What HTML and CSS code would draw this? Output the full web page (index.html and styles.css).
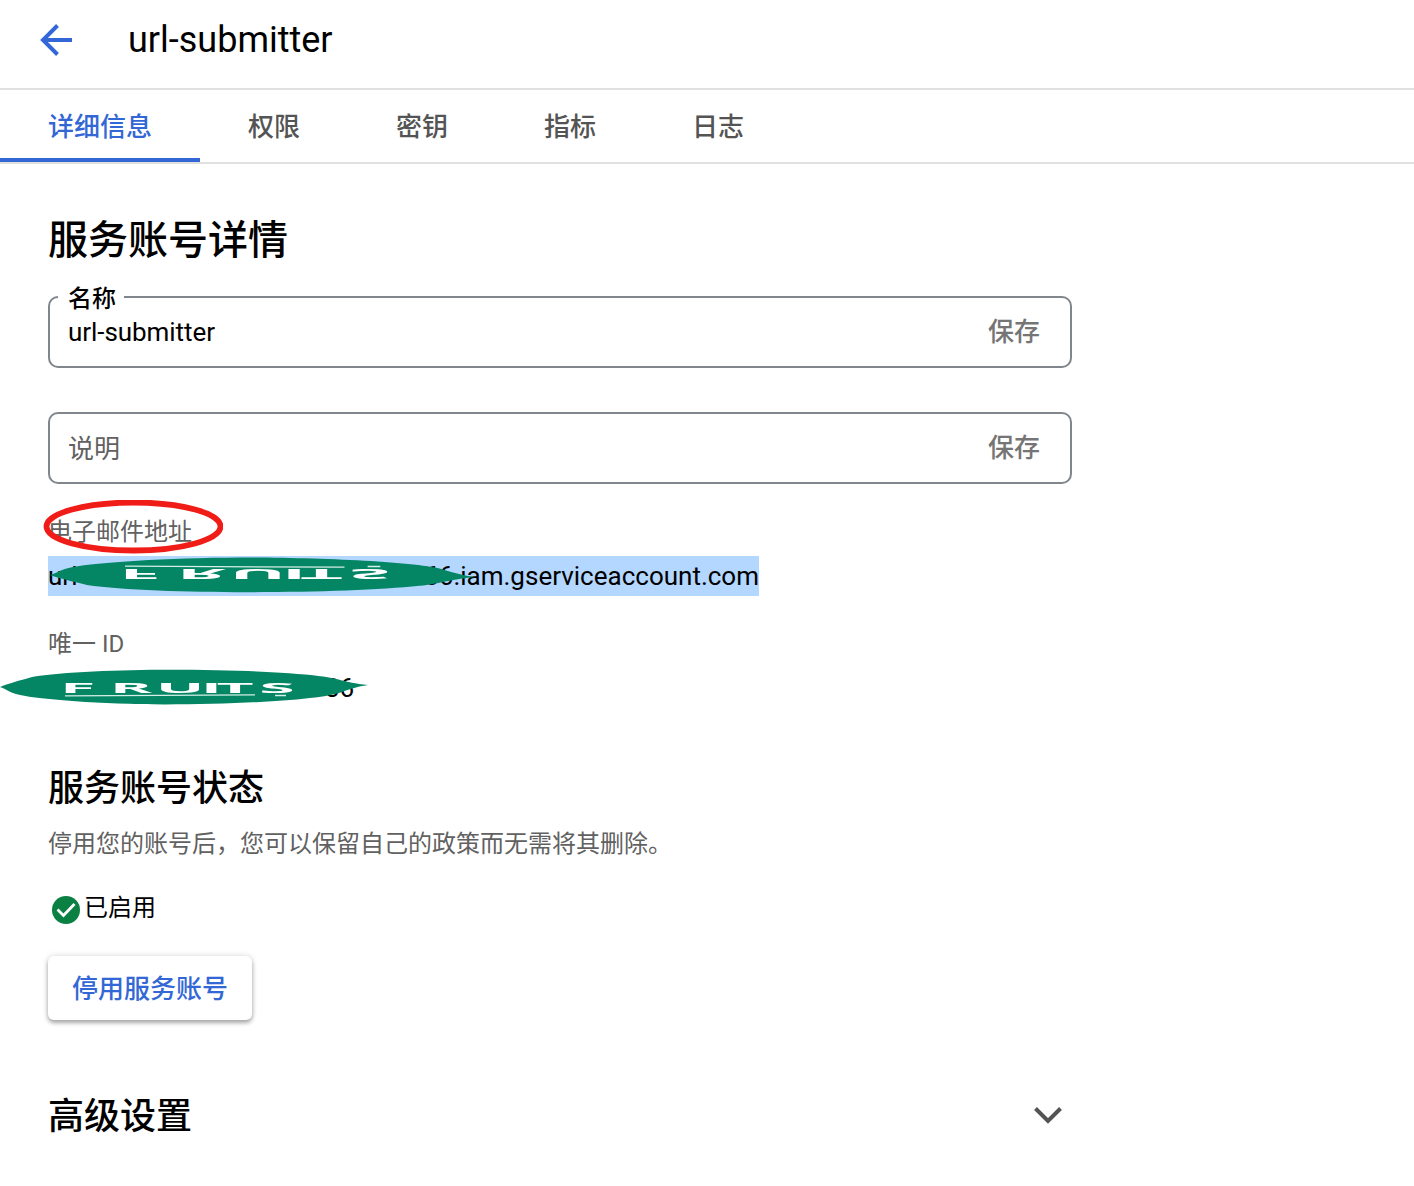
FILE: index.html
```html
<!DOCTYPE html>
<html lang="zh-CN">
<head>
<meta charset="utf-8">
<title>url-submitter</title>
<link rel="stylesheet" href="styles.css">
</head>
<body>
<svg class="defs" width="0" height="0" aria-hidden="true">
  <defs>
    <symbol id="fruit-label" viewBox="0 0 368 36" preserveAspectRatio="none">
      <path fill="#048564" d="M0 18C10 14 18 12 32 8C62 3 120 0.800 170 0.800C230 0.800 285 3 320 7.200C338 9 342 13 368 16C356 18 354 19 343 22.500C325 31 235 35.500 165 35.500C100 35 40 30.500 20 26C8 23 8 21 0 18Z"/>
      <g class="fruit-text">
        <text transform="translate(60 23.800) scale(4.600 1)" x="0 10.800 20.800 30.600 34 43.300">FRUITS</text>
      </g>
      <path stroke="#d5eee6" stroke-width="1.200" d="M65 26.800L255 25.800"/>
      <path stroke="#d5eee6" stroke-width="1.500" d="M275 26.500H286"/>
    </symbol>
  </defs>
</svg>
<header class="topbar">
  <svg class="back" width="32" height="32" viewBox="0 0 32 32" fill="none" stroke="#3367d6" stroke-width="4"><path d="M32 16H3M17.500 1.500L3 16l14.500 14.500"/></svg>
  <h1 class="title">url-submitter</h1>
</header>
<nav class="tabs">
  <a class="tab active">详细信息</a><a class="tab">权限</a><a class="tab">密钥</a><a class="tab">指标</a><a class="tab">日志</a>
</nav>
<main class="content">
  <h2 class="heading">服务账号详情</h2>
  <div class="field">
    <span class="field-label">名称</span>
    <span class="field-value">url-submitter</span>
    <span class="save">保存</span>
  </div>
  <div class="field">
    <span class="placeholder">说明</span>
    <span class="save">保存</span>
  </div>
  <div class="label email-label"><span>电子邮件地址</span>
    <svg class="ring" width="180" height="54" viewBox="0 0 180 54"><ellipse cx="90.500" cy="26.500" rx="87" ry="24" fill="none" stroke="#f01c17" stroke-width="5.800"/></svg>
  </div>
  <div class="value email"><span class="selected"><span>url-s</span><span class="email-end">66.iam.gserviceaccount.com</span></span>
    <svg class="patch patch-email"><use href="#fruit-label" width="425" height="36"/></svg>
  </div>
  <div class="label id-label">唯一 ID</div>
  <div class="value id"><span class="id-end">36</span>
    <svg class="patch patch-id"><use href="#fruit-label" width="368" height="36"/></svg>
  </div>
  <h3 class="subheading">服务账号状态</h3>
  <p class="desc">停用您的账号后，您可以保留自己的政策而无需将其删除。</p>
  <div class="status">
    <svg width="28" height="28" viewBox="0 0 28 28"><circle cx="14" cy="14" r="14" fill="#0b8043"/><path d="M5.500 13.500l6 6L22.500 8" fill="none" stroke="#fff" stroke-width="2.800"/></svg>
    <span class="status-text">已启用</span>
  </div>
  <button class="button" type="button">停用服务账号</button>
  <div class="advanced">
    <h3>高级设置</h3>
    <svg width="28" height="18" viewBox="0 0 28 18" fill="none" stroke="#545454" stroke-width="4"><path d="M1.500 1.500L14 14 26.500 1.500"/></svg>
  </div>
</main>
</body>
</html>
```
FILE: styles.css
```css
* { box-sizing: border-box; }
body {
  margin: 0;
  background: #fff;
  color: #000;
  font-family: Roboto, "Noto Sans CJK SC", sans-serif;
  font-size: 26px;
}
h1, h2, h3, p { margin: 0; font-weight: 400; }
.defs { display: block; }
.topbar {
  height: 90px;
  padding: 0 40px 8px;
  display: flex;
  align-items: center;
  gap: 56px;
  border-bottom: 2px solid #e0e0e0;
}
.title { font-size: 36px; line-height: 48px; }
.tabs {
  display: flex;
  height: 74px;
  border-bottom: 2px solid #e0e0e0;
}
.tab {
  padding: 0 48px;
  height: 72px;
  line-height: 74px;
  color: #545454;
  font-weight: 500;
}
.tab.active {
  color: #3367d6;
  border-bottom: 4px solid #3367d6;
}
.content { width: 1120px; padding: 45px 48px 0; }
.heading {
  height: 64px;
  line-height: 64px;
  font-size: 40px;
  font-weight: 500;
  margin-bottom: 23px;
}
.field {
  position: relative;
  display: flex;
  align-items: center;
  justify-content: space-between;
  height: 72px;
  padding: 0 30px 0 18px;
  border: 2px solid #80868b;
  border-radius: 10px;
  margin-bottom: 44px;
}
.field-value { letter-spacing: -0.06px; }
.field-label {
  position: absolute;
  top: -13px;
  left: 8px;
  padding: 0 8px 0 10px;
  background: #fff;
  font-size: 24px;
  line-height: 28px;
  font-weight: 500;
}
.placeholder { color: #616161; padding-bottom: 4px; }
.save { color: #757575; font-weight: 500; padding-bottom: 6px; }
.label { font-size: 24px; line-height: 32px; color: #616161; }
.email-label { position: relative; margin-top: -12px; }
.ring { position: absolute; left: -5px; top: -16px; z-index: 2; }
.value { position: relative; height: 40px; line-height: 40px; }
.email { margin-top: 8px; }
.selected {
  display: flex;
  justify-content: space-between;
  width: 711px;
  background: #b3d7ff;
}
.patch { position: absolute; height: 36px; overflow: visible; filter: blur(0.6px); }
.patch-email { left: 2px; top: 1px; width: 425px; transform: scaleY(-1); }
.patch-id { left: -48px; top: 0; width: 368px; }
.fruit-text {
  font-family: "Open Sans", sans-serif;
  font-size: 14px;
  font-weight: 700;
  fill: #fff;
}
.id-label { margin-top: 32px; }
.id { margin-top: 9px; padding-left: 277px; }
.id-end { display: block; line-height: 38px; }
.subheading {
  margin-top: 54px;
  font-size: 36px;
  font-weight: 500;
  line-height: 52px;
}
.desc { margin-top: 13px; font-size: 24px; line-height: 32px; color: #616161; }
.status {
  display: flex;
  align-items: center;
  gap: 4px;
  height: 32px;
  margin: 34px 0 0 4px;
  font-size: 24px;
  line-height: 32px;
}
.status-text { padding-bottom: 4px; }
.button {
  display: block;
  margin-top: 30px;
  width: 204px;
  height: 64px;
  padding: 2px 0 0;
  border: 0;
  border-radius: 6px;
  background: #fff;
  color: #3367d6;
  font: 500 26px/62px Roboto, "Noto Sans CJK SC", sans-serif;
  box-shadow: 0 3px 4px rgba(0, 0, 0, .3), 0 0 6px rgba(0, 0, 0, .14);
}
.advanced {
  display: flex;
  align-items: center;
  justify-content: space-between;
  margin-top: 70px;
  height: 52px;
  padding-right: 10px;
}
.advanced h3 { font-size: 36px; line-height: 50px; padding-top: 2px; font-weight: 500; }
```
